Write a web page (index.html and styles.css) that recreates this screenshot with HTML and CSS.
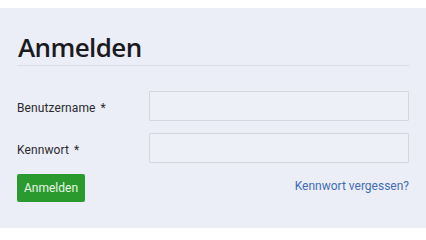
FILE: index.html
```html
<!DOCTYPE html>
<html lang="de">
<head>
<meta charset="utf-8">
<title>Anmelden</title>
<link rel="stylesheet" href="styles.css">
</head>
<body>
<main class="panel">
  <h1 class="title">Anmelden</h1>
  <form class="form">
    <div class="row">
      <label class="label" for="user">Benutzername *</label>
      <input class="input" id="user" type="text">
    </div>
    <div class="row">
      <label class="label" for="pw">Kennwort *</label>
      <input class="input" id="pw" type="password">
    </div>
    <div class="actions">
      <button class="btn" type="button">Anmelden</button>
      <a class="link" href="#">Kennwort vergessen?</a>
    </div>
  </form>
</main>
</body>
</html>
```
FILE: styles.css
```css
html, body {
  margin: 0;
  padding: 0;
  background: #ffffff;
}
body {
  font-family: Roboto, "Open Sans", sans-serif;
  color: #222;
}
.panel {
  margin-top: 8px;
  height: 220px;
  box-sizing: border-box;
  background: #eceef7;
  padding: 23px 17px 0 17px;
}
.title {
  margin: 0;
  font-family: "Open Sans", "Noto Sans", sans-serif;
  font-size: 26px;
  line-height: 32px;
  font-weight: 600;
  color: #1b1b1f;
  padding-bottom: 2px;
  border-bottom: 1px solid #dcdce6;
  letter-spacing: -0.6px;
  padding-left: 1px;
}
.form {
  display: flex;
  flex-direction: column;
  gap: 12px;
  margin-top: 25px;
}
.row {
  display: flex;
  align-items: center;
}
.label {
  width: 132px;
  flex: none;
  font-size: 12px;
  color: #2a2a2e;
  padding-top: 3px;
  letter-spacing: 0.1px;
  word-spacing: 2px;
}
.input {
  flex: 1;
  height: 30px;
  box-sizing: border-box;
  border: 1px solid #d4d6e0;
  background: #eef0f8;
  border-radius: 1px;
  margin: 0;
}
.actions {
  display: flex;
  justify-content: space-between;
  align-items: center;
  margin-top: -1px;
}
.btn {
  width: 68px;
  height: 28px;
  border: none;
  border-radius: 2px;
  background: #2a9a2e;
  color: #eaf6ea;
  font-family: Roboto, "Open Sans", sans-serif;
  font-size: 12px;
  padding: 0;
}
.link {
  color: #3d6db5;
  text-decoration: none;
  font-size: 12px;
  margin-top: -5px;
}
```
